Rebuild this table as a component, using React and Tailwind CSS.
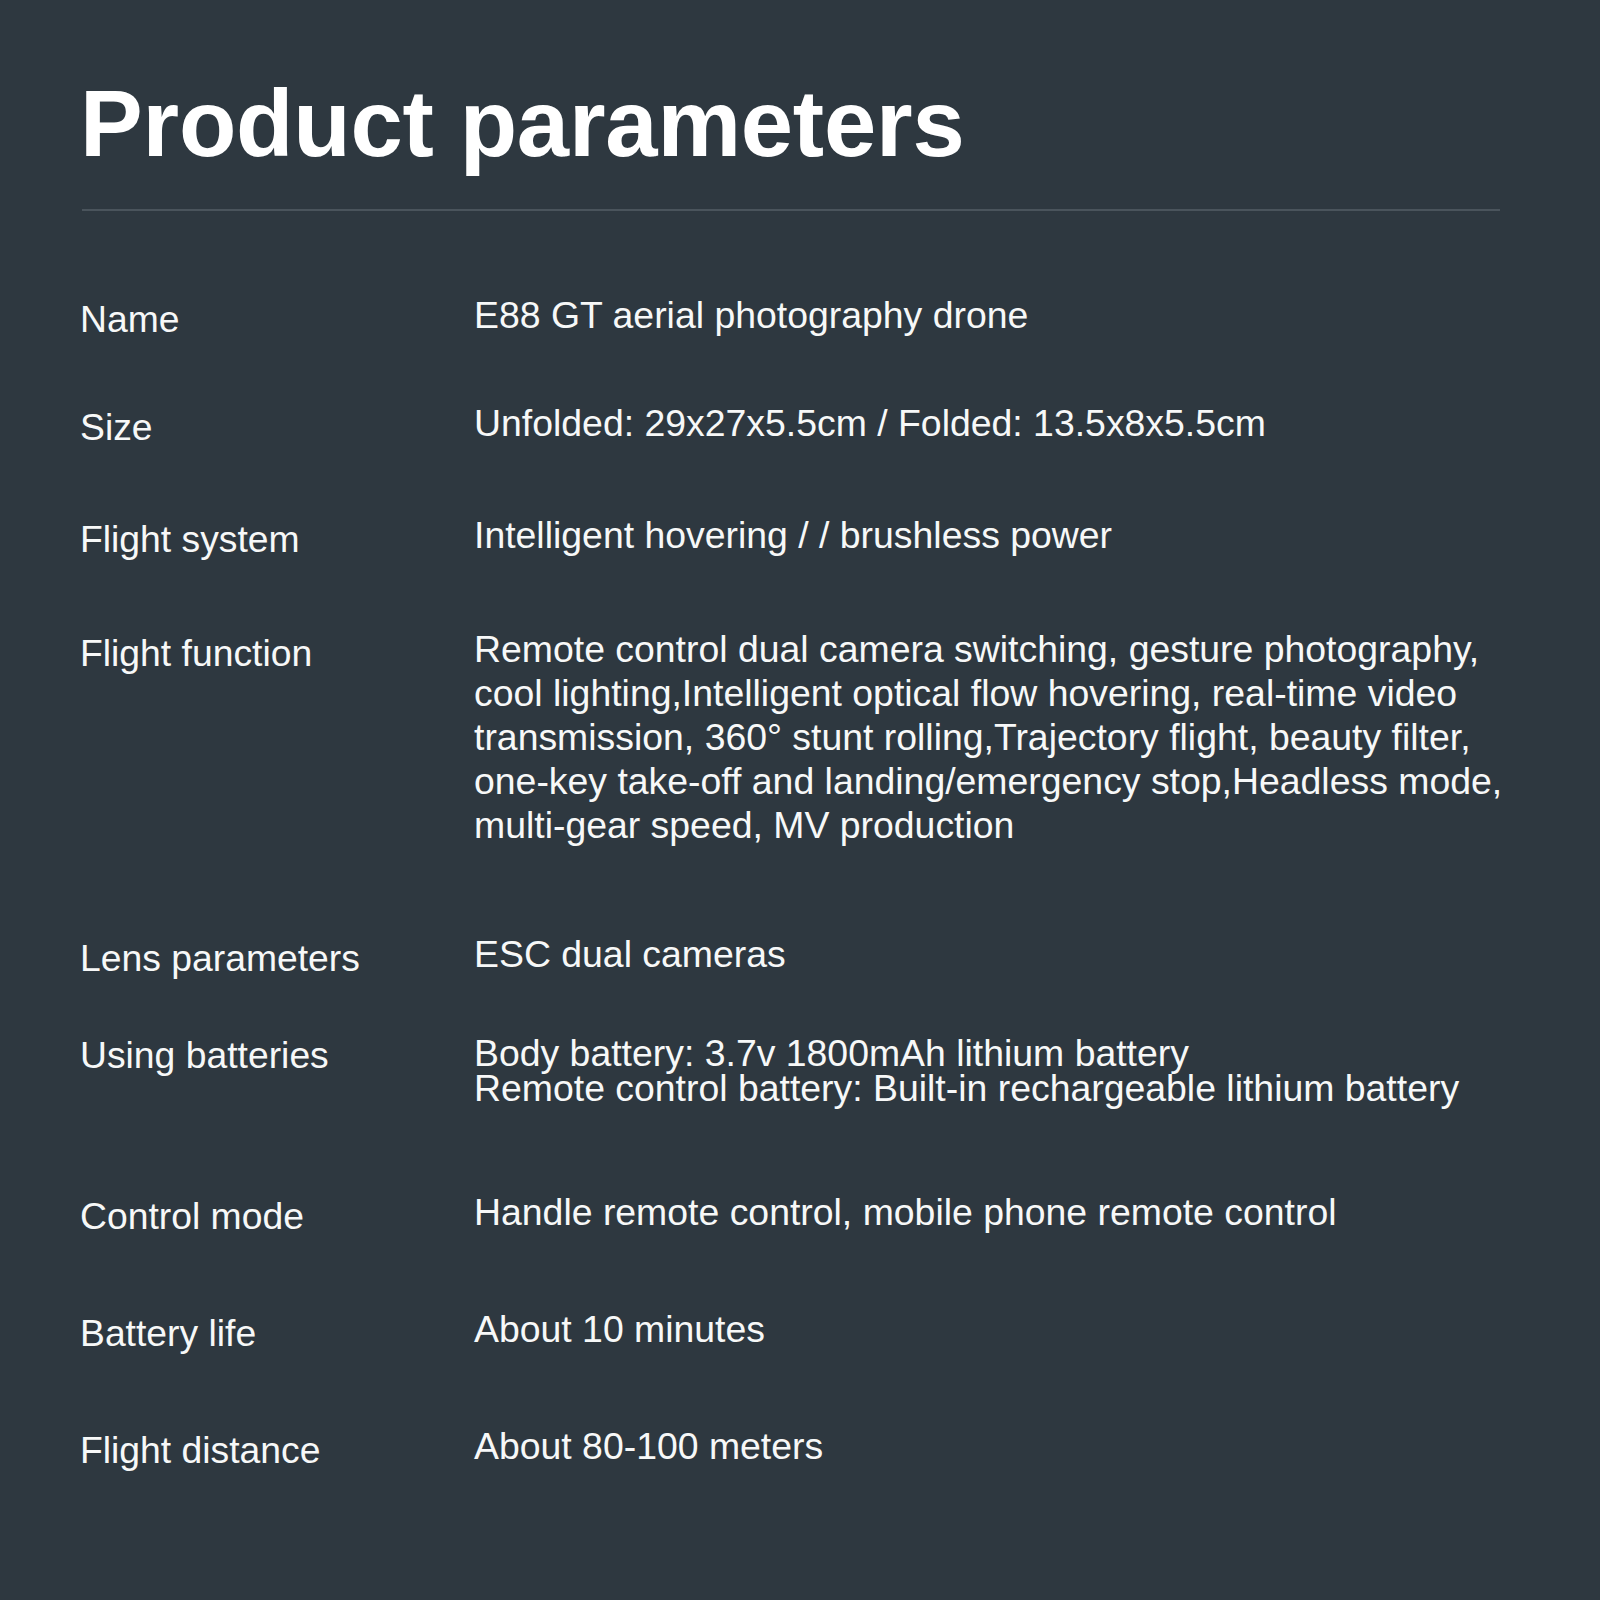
const rows = [
  { label: 'Name', mt: 'mt-[82px]', value: ['E88 GT aerial photography drone'] },
  { label: 'Size', mt: 'mt-[64px]', value: ['Unfolded: 29x27x5.5cm / Folded: 13.5x8x5.5cm'] },
  { label: 'Flight system', mt: 'mt-[68px]', value: ['Intelligent hovering / / brushless power'] },
  {
    label: 'Flight function',
    mt: 'mt-[70px]',
    value: [
      'Remote control dual camera switching, gesture photography,',
      'cool lighting,Intelligent optical flow hovering, real-time video',
      'transmission, 360° stunt rolling,Trajectory flight, beauty filter,',
      'one-key take-off and landing/emergency stop,Headless mode,',
      'multi-gear speed, MV production',
    ],
  },
  { label: 'Lens parameters', mt: 'mt-[85px]', value: ['ESC dual cameras'] },
  {
    label: 'Using batteries',
    mt: 'mt-[57px]',
    tight: true,
    value: [
      'Body battery: 3.7v 1800mAh lithium battery',
      'Remote control battery: Built-in rechargeable lithium battery',
    ],
  },
  { label: 'Control mode', mt: 'mt-[84px]', value: ['Handle remote control, mobile phone remote control'] },
  { label: 'Battery life', mt: 'mt-[73px]', value: ['About 10 minutes'] },
  { label: 'Flight distance', mt: 'mt-[73px]', value: ['About 80-100 meters'] },
];

export default function App() {
  return (
    <div
      className="w-[1600px] h-[1600px] bg-[#2e3840] text-[#f7f8f8] px-[80px] pt-[69px] overflow-hidden"
      style={{ fontFamily: '"Liberation Sans", Arial, sans-serif' }}
    >
      <h1 className="text-[94px] leading-[110px] font-bold tracking-[-0.2px] text-white">
        Product parameters
      </h1>
      <div className="mt-[30px] ml-[2px] w-[1418px] h-[2px] bg-[#4a545c]" />

      {rows.map((row) => (
        <div key={row.label} className={`flex items-start ${row.mt}`}>
          {row.tight ? (
            <div className="w-[394px] shrink-0 text-[37.3px] leading-[44px]">{row.label}</div>
          ) : (
            <div className="w-[394px] shrink-0 text-[37.3px] leading-[44px] pt-[4px] -mb-[4px]">
              {row.label}
            </div>
          )}
          {row.tight ? (
            <div className="text-[37.4px] leading-[35px] pt-[3px] whitespace-nowrap">
              {row.value.map((line) => (
                <div key={line}>{line}</div>
              ))}
            </div>
          ) : (
            <div className="text-[37.4px] leading-[44px] whitespace-nowrap">
              {row.value.map((line) => (
                <div key={line}>{line}</div>
              ))}
            </div>
          )}
        </div>
      ))}
    </div>
  );
}
